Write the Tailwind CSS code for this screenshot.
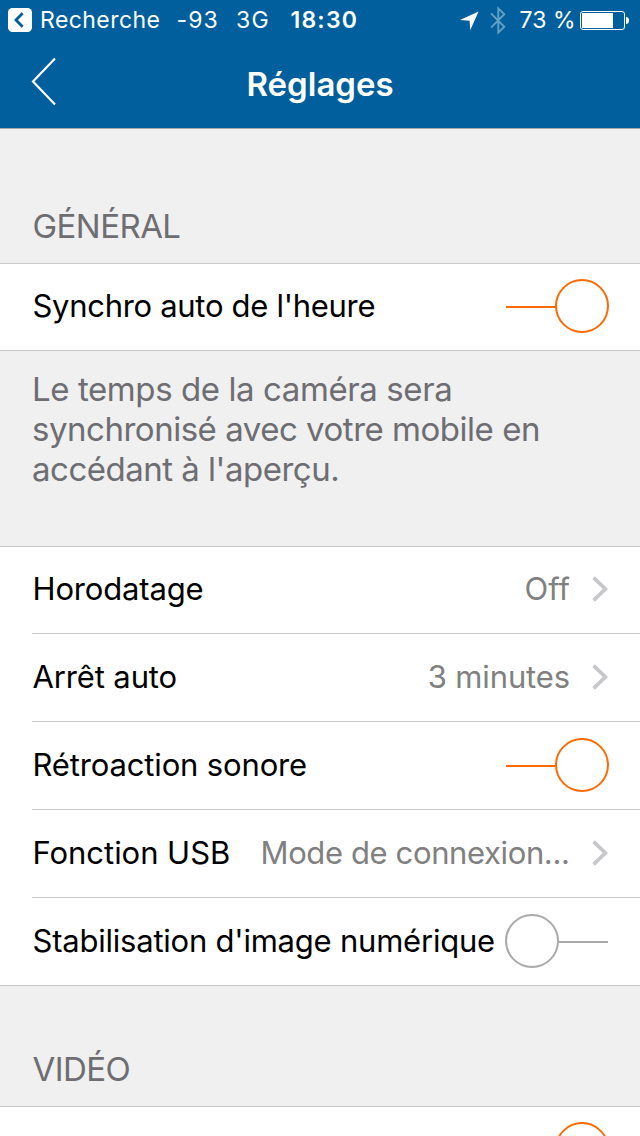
<!DOCTYPE html>
<html lang="fr">
<head>
<meta charset="utf-8">
<title>Réglages</title>
<script src="https://cdn.jsdelivr.net/npm/@tailwindcss/browser@4"></script>
</head>
<body class="h-[1136px] w-[640px] overflow-hidden bg-[#f0f0f0] font-[Inter,sans-serif] text-[31px] leading-[40px] whitespace-nowrap text-black">
<header class="h-[129px] border-b border-[#a5a9ac] bg-[#005f9c] text-white">
  <!-- Status bar -->
  <div class="flex h-10 items-center text-[23px]">
    <svg class="ml-2 size-6" viewBox="0 0 24 24"><rect width="24" height="24" rx="4.5" fill="#fff"/><path d="M14.6 5.2L8 12l6.6 6.8" fill="none" stroke="#005f9c" stroke-width="2.8"/></svg>
    <span class="ml-2 w-[136.5px] tracking-[0.43px]">Recherche</span>
    <span class="w-[59.5px] tracking-[1.1px]">-93</span>
    <span class="w-[54.5px] tracking-[1.2px]">3G</span>
    <span class="w-[168.5px] font-semibold tracking-[1.2px]">18:30</span>
    <svg class="h-10 w-[60.5px]" viewBox="459 0 60.5 40"><path d="M478.6 11.4L460 20.1l9.6.6.6 9.6z" fill="#fff"/><path d="M491 13.3L504.3 26.8 498.3 32.6V8.4L504.3 14.2 491 27.6" fill="none" stroke="#659fc5" stroke-width="1.9"/></svg>
    <span class="w-[60.5px] tracking-[0.1px]">73 %</span>
    <svg class="h-10 w-[50px]" viewBox="580 0 50 40"><rect x="580.5" y="11.5" width="44" height="18" rx="2.5" fill="none" stroke="#fff"/><path d="M582 13h31v15h-31z" fill="#fff"/><path d="M626 17q3 0 3 3.5t-3 3.5z" fill="#fff"/></svg>
  </div>
  <div class="flex h-[88px] items-center">
    <svg class="ml-6 h-[88px] w-10" viewBox="24 40 40 88"><path d="M55 58.5L33 81.5 55 104.5" fill="none" stroke="#fff" stroke-width="2.2"/></svg>
    <h1 class="ml-[182.5px] text-[33px] font-semibold">Réglages</h1>
  </div>
</header>

<main>
  <h2 class="h-[134px] pt-[77px] pl-[32.5px] text-[33px] tracking-[-0.55px] text-[#6d6d72]">GÉNÉRAL</h2>
  <section class="border-y border-[#c8c7cc] bg-white">
    <div class="flex h-[86px] items-center justify-between pr-[31px] pb-0.5 pl-[32.5px]">
      <span class="tracking-[-0.3px]">Synchro auto de l'heure</span>
      <svg class="h-[54px] w-[103px]" viewBox="0 0 103 54" fill="none" stroke="#ff6a00" stroke-width="2"><path d="M0 28h50"/><circle cx="76" cy="27" r="26"/></svg>
    </div>
  </section>
  <p class="h-[195px] pt-[18px] pl-8 text-[33px] text-[#6d6d72]">
    <span class="block tracking-[-0.41px]">Le temps de la caméra sera</span>
    <span class="block tracking-[-0.48px]">synchronisé avec votre mobile en</span>
    <span class="block tracking-[-0.5px]">accédant à l'aperçu.</span>
  </p>
  <section class="border-y border-[#c8c7cc] bg-white pl-8">
    <div class="flex h-[87px] items-center border-b border-[#c8c7cc] pr-8 pb-0.5">
      <span class="ml-[0.5px] tracking-[-0.16px]">Horodatage</span>
      <span class="ml-auto text-[#808080]">Off</span>
      <svg class="ml-[22px] h-7 w-4" viewBox="0 0 16 28"><path d="M1.6 2.6L13.4 14 1.6 25.4" fill="none" stroke="#c7c7cc" stroke-width="3.7"/></svg>
    </div>
    <div class="flex h-[88px] items-center border-b border-[#c8c7cc] pr-8 pb-0.5">
      <span class="ml-[0.5px] tracking-[-0.13px]">Arrêt auto</span>
      <span class="ml-auto tracking-[-0.13px] text-[#808080]">3 minutes</span>
      <svg class="ml-[22px] h-7 w-4" viewBox="0 0 16 28"><path d="M1.6 2.6L13.4 14 1.6 25.4" fill="none" stroke="#c7c7cc" stroke-width="3.7"/></svg>
    </div>
    <div class="flex h-[88px] items-center justify-between border-b border-[#c8c7cc] pr-[31px] pb-0.5">
      <span class="ml-[0.5px] tracking-[-0.15px]">Rétroaction sonore</span>
      <svg class="h-[54px] w-[103px]" viewBox="0 0 103 54" fill="none" stroke="#ff6a00" stroke-width="2"><path d="M0 28h50"/><circle cx="76" cy="27" r="26"/></svg>
    </div>
    <div class="flex h-[88px] items-center border-b border-[#c8c7cc] pr-8 pb-0.5">
      <span class="ml-[0.5px] tracking-[-0.04px]">Fonction USB</span>
      <span class="ml-auto tracking-[-0.38px] text-[#808080]">Mode de connexion...</span>
      <svg class="ml-[22.5px] h-7 w-4" viewBox="0 0 16 28"><path d="M1.6 2.6L13.4 14 1.6 25.4" fill="none" stroke="#c7c7cc" stroke-width="3.7"/></svg>
    </div>
    <div class="flex h-[87px] items-center justify-between pr-8 pb-0.5">
      <span class="ml-[0.5px] tracking-[-0.22px]">Stabilisation d'image numérique</span>
      <svg class="h-[54px] w-[103px]" viewBox="0 0 103 54" fill="none" stroke="#a9a9a9" stroke-width="2"><path d="M54 28h49"/><circle cx="27" cy="27" r="26"/></svg>
    </div>
  </section>
  <h2 class="h-[120px] pt-[63px] pl-[32.5px] text-[33px] tracking-[-0.6px] text-[#6d6d72]">VIDÉO</h2>
  <section class="h-[30px] overflow-hidden border-t border-[#c8c7cc] bg-white pt-[15px] pr-[31px]">
    <svg class="ml-auto h-[14px] w-[103px]" viewBox="0 0 103 14" fill="none" stroke="#ff6a00" stroke-width="2"><circle cx="76" cy="27" r="26"/></svg>
  </section>
</main>
</body>
</html>
